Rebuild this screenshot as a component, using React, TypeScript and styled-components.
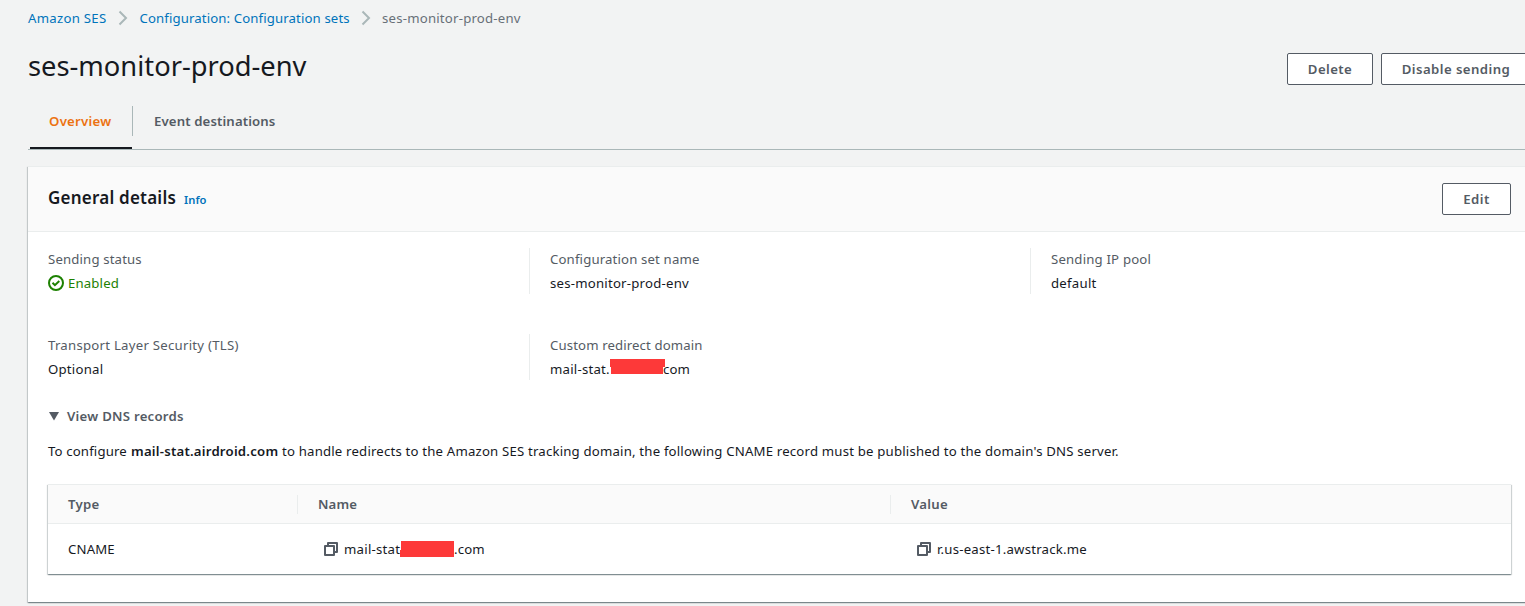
import React from "react";
import styled, { createGlobalStyle } from "styled-components";

const GlobalStyle = createGlobalStyle`
  html, body { margin: 0; padding: 0; }
  body {
    background: #f2f3f3;
    color: #16191f;
    font-family: "Noto Sans", "Open Sans", sans-serif;
    font-size: 13.2px;
    line-height: 22px;
    overflow: hidden;
  }
  *, *::before, *::after { box-sizing: border-box; }
`;

const T = styled.span<{ $ls?: number }>`
  white-space: nowrap;
  letter-spacing: ${(p) => p.$ls ?? 0.15}px;
`;

const Page = styled.main`
  width: 1531px;
  height: 606px;
  padding: 7px 0 0 28px;
`;

const Breadcrumbs = styled.nav`
  display: flex;
  align-items: center;
  height: 22px;
  color: #687078;
`;

const Crumb = styled.a<{ $w: number }>`
  width: ${(p) => p.$w}px;
  color: #0073bb;
`;

const Chevron = styled.svg`
  display: block;
  width: 10px;
  height: 16px;
  margin: 0 11.5px 0 11px;
`;

const TitleRow = styled.header`
  display: flex;
  justify-content: space-between;
  height: 56px;
  padding-top: 19px;
`;

const Title = styled.h1`
  margin: 0;
  font-size: 27.3px;
  line-height: 36px;
  font-weight: 400;
`;

const Actions = styled.div`
  display: flex;
  gap: 8px;
  padding-top: 5px;
`;

const Button = styled.button<{ $w: number }>`
  width: ${(p) => p.$w}px;
  height: 32px;
  padding: 0;
  border: 1px solid #545b64;
  border-radius: 2px;
  background: #fff;
  color: #545b64;
  font: 600 13.2px/20px "Noto Sans", sans-serif;
  text-align: center;
`;

const Tabs = styled.div`
  display: flex;
  align-items: flex-start;
  height: 65px;
  padding-top: 21px;
  border-bottom: 1px solid #aab7b8;
`;

const Tab = styled.div<{ $active?: boolean }>`
  height: 43px;
  padding: ${(p) => (p.$active ? "4px 0 0 19px" : "4px 0 0 21px")};
  width: ${(p) => (p.$active ? "102px" : "auto")};
  margin-left: ${(p) => (p.$active ? "2px" : "0")};
  border-bottom: ${(p) => (p.$active ? "2px solid #16191f" : "0")};
  color: ${(p) => (p.$active ? "#ec7211" : "#545b64")};
  font-weight: 600;
`;

const TabDivider = styled.div`
  width: 1px;
  height: 30px;
  background: #aab7b8;
`;

const Card = styled.section`
  height: 436px;
  margin-top: 16px;
  border-top: 1px solid #eaeded;
  background: #fff;
  box-shadow: 0 1px 1px 0 rgba(0, 28, 36, 0.3), 1px 1px 1px 0 rgba(0, 28, 36, 0.15),
    -1px 1px 1px 0 rgba(0, 28, 36, 0.15);
`;

const CardHeader = styled.div`
  display: flex;
  align-items: center;
  height: 65px;
  padding: 0 20px;
  border-bottom: 1px solid #eaeded;
  background: #fafafa;
`;

const CardTitle = styled.h2`
  flex: 1;
  display: flex;
  align-items: baseline;
  gap: 8px;
  margin: 0;
  font-size: 17px;
  line-height: 22px;
  font-weight: 600;
`;

const InfoLink = styled.a`
  color: #0073bb;
  font-size: 11.2px;
  font-weight: 600;
`;

const Details = styled.div`
  display: grid;
  grid-template-columns: repeat(3, 501px);
  row-gap: 40px;
  padding-top: 16px;
`;

const Detail = styled.div<{ $first?: boolean }>`
  display: flex;
  flex-direction: column;
  gap: 2px;
  height: 46px;
  padding-left: 20px;
  border-left: ${(p) => (p.$first ? "0" : "1px solid #eaeded")};
`;

const Label = styled.div`
  color: #545b64;
`;

const Value = styled.div<{ $ok?: boolean }>`
  display: flex;
  align-items: center;
  height: 22px;
  color: ${(p) => (p.$ok ? "#1d8102" : "#16191f")};
`;

const StatusIcon = styled.svg`
  width: 16px;
  height: 16px;
  margin-right: 4px;
`;

const Redaction = styled.span<{ $w: number; $h: number; $shape: string; $lift?: number; $overlap?: number }>`
  flex: none;
  width: ${(p) => p.$w}px;
  height: ${(p) => p.$h}px;
  margin-right: ${(p) => -(p.$overlap ?? 0)}px;
  margin-bottom: ${(p) => p.$lift ?? 0}px;
  background: #fd3939;
  clip-path: ${(p) => p.$shape};
`;

const Fixed = styled.span<{ $w: number }>`
  flex: none;
  display: flex;
  width: ${(p) => p.$w}px;
`;

const Expander = styled.div`
  display: flex;
  align-items: center;
  height: 22px;
  margin: 25px 0 0 20px;
  color: #545b64;
  font-weight: 600;
`;

const Caret = styled.svg`
  width: 12px;
  height: 10px;
  margin-right: 7px;
`;

const Note = styled.p`
  display: flex;
  margin: 13px 0 0 20px;
`;

const Strong = styled.strong`
  font-weight: 600;
`;

const Table = styled.div`
  width: 1463px;
  height: 90px;
  margin: 22px 0 0 20px;
  border-top: 1px solid #eaeded;
  box-shadow: 0 1px 1px 0 rgba(0, 28, 36, 0.3), 1px 1px 1px 0 rgba(0, 28, 36, 0.15),
    -1px 1px 1px 0 rgba(0, 28, 36, 0.15);
`;

const Row = styled.div<{ $head?: boolean }>`
  display: grid;
  grid-template-columns: 249px 593px 1fr;
  align-items: center;
  height: ${(p) => (p.$head ? 39 : 50)}px;
  background: ${(p) => (p.$head ? "#fafafa" : "#fff")};
  border-bottom: ${(p) => (p.$head ? "1px solid #eaeded" : "0")};
`;

const HeadCell = styled.div<{ $first?: boolean }>`
  height: 19px;
  padding-left: 20px;
  border-left: ${(p) => (p.$first ? "0" : "1px solid #eaeded")};
  color: #545b64;
  font-weight: 600;
  line-height: 19px;
`;

const Cell = styled.div<{ $copy?: boolean }>`
  display: flex;
  align-items: center;
  padding-left: ${(p) => (p.$copy ? 26 : 20)}px;
`;

const CopySvg = styled.svg`
  flex: none;
  width: 16px;
  height: 16px;
  margin-right: 5px;
`;

const Separator = () => (
  <Chevron viewBox="0 0 10 16" fill="none" stroke="#aab7b8" strokeWidth="2">
    <path d="M1.5 1.5 8 8l-6.5 6.5" />
  </Chevron>
);

const CopyIcon = () => (
  <CopySvg viewBox="0 0 16 16" fill="none" stroke="#545b64" strokeWidth="2" strokeLinejoin="round">
    <path d="M2 5h9v9H2zM5 5V2h9v9h-3" />
  </CopySvg>
);

export default function App() {
  return (
    <>
      <GlobalStyle />
      <Page>
        <Breadcrumbs>
          <Crumb $w={79}><T $ls={0.27}>Amazon SES</T></Crumb>
          <Separator />
          <Crumb $w={210}><T $ls={0.12}>Configuration: Configuration sets</T></Crumb>
          <Separator />
          <T $ls={0.21}>ses-monitor-prod-env</T>
        </Breadcrumbs>
        <TitleRow>
          <Title><T $ls={0}>ses-monitor-prod-env</T></Title>
          <Actions>
            <Button $w={86}><T $ls={0.41}>Delete</T></Button>
            <Button $w={150}><T $ls={0.43}>Disable sending</T></Button>
          </Actions>
        </TitleRow>
        <Tabs>
          <Tab $active><T $ls={0.25}>Overview</T></Tab>
          <TabDivider />
          <Tab><T $ls={0.12}>Event destinations</T></Tab>
        </Tabs>
        <Card>
          <CardHeader>
            <CardTitle>
              <T $ls={0.22}>General details</T>
              <InfoLink><T $ls={0.05}>Info</T></InfoLink>
            </CardTitle>
            <Button $w={69}><T $ls={0.46}>Edit</T></Button>
          </CardHeader>
          <Details>
            <Detail $first>
              <Label><T>Sending status</T></Label>
              <Value $ok>
                <StatusIcon viewBox="0 0 16 16" fill="none" stroke="#1d8102" strokeWidth="2">
                  <circle cx="8" cy="8" r="7" />
                  <path d="m4.5 7.8 2.4 2.4 4.4-4.2" />
                </StatusIcon>
                <T>Enabled</T>
              </Value>
            </Detail>
            <Detail>
              <Label><T>Configuration set name</T></Label>
              <Value><T $ls={0.22}>ses-monitor-prod-env</T></Value>
            </Detail>
            <Detail>
              <Label><T $ls={0.18}>Sending IP pool</T></Label>
              <Value><T $ls={0.25}>default</T></Value>
            </Detail>
            <Detail $first>
              <Label><T $ls={0.25}>Transport Layer Security (TLS)</T></Label>
              <Value><T $ls={0.22}>Optional</T></Value>
            </Detail>
            <Detail>
              <Label><T $ls={0.12}>Custom redirect domain</T></Label>
              <Value>
                <Fixed $w={60}><T $ls={0.23}>mail-stat.</T></Fixed>
                <Redaction $w={55} $h={15} $lift={5} $overlap={2} $shape="polygon(0 0, 55px 0, 55px 8px, 53px 8px, 53px 15px, 1px 15px, 1px 8px, 0 8px)" />
                <T>com</T>
              </Value>
            </Detail>
          </Details>
          <Expander>
            <Caret viewBox="0 0 12 10"><path d="M1 1h10L6 9.5z" fill="#545b64" stroke="none" /></Caret>
            <T $ls={0.25}>View DNS records</T>
          </Expander>
          <Note>
            <Fixed $w={83}><T>To configure</T></Fixed>
            <Fixed $w={151}><Strong><T $ls={0.22}>mail-stat.airdroid.com</T></Strong></Fixed>
            <T $ls={0.187}>to handle redirects to the Amazon SES tracking domain, the following CNAME record must be published to the domain's DNS server.</T>
          </Note>
          <Table>
            <Row $head>
              <HeadCell $first><T $ls={0.27}>Type</T></HeadCell>
              <HeadCell><T>Name</T></HeadCell>
              <HeadCell><T $ls={0.27}>Value</T></HeadCell>
            </Row>
            <Row>
              <Cell><T>CNAME</T></Cell>
              <Cell $copy>
                <CopyIcon />
                <Fixed $w={56}><T $ls={0.25}>mail-stat</T></Fixed>
                <Redaction $w={54} $h={16} $shape="polygon(1px 0, 54px 0, 54px 16px, 0 16px, 0 9px, 1px 9px)" />
                <T>.com</T>
              </Cell>
              <Cell $copy>
                <CopyIcon />
                <T $ls={0.22}>r.us-east-1.awstrack.me</T>
              </Cell>
            </Row>
          </Table>
        </Card>
      </Page>
    </>
  );
}
